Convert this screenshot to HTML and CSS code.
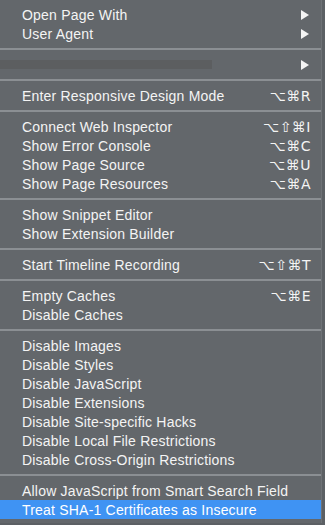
FILE: index.html
```html
<!DOCTYPE html>
<html>
<head>
<meta charset="utf-8">
<link rel="stylesheet" href="styles.css">
</head>
<body>
<div class="menu">
  <div class="item"><span class="label">Open Page With</span><span class="arrow"></span></div>
  <div class="item"><span class="label">User Agent</span><span class="arrow"></span></div>
  <div class="sep"></div>
  <div class="item blurred"><span class="smudge"></span><span class="arrow"></span></div>
  <div class="sep"></div>
  <div class="item"><span class="label">Enter Responsive Design Mode</span><span class="key">⌥⌘R</span></div>
  <div class="sep"></div>
  <div class="item"><span class="label">Connect Web Inspector</span><span class="key">⌥⇧⌘I</span></div>
  <div class="item"><span class="label">Show Error Console</span><span class="key">⌥⌘C</span></div>
  <div class="item"><span class="label">Show Page Source</span><span class="key">⌥⌘U</span></div>
  <div class="item"><span class="label">Show Page Resources</span><span class="key">⌥⌘A</span></div>
  <div class="sep"></div>
  <div class="item"><span class="label">Show Snippet Editor</span></div>
  <div class="item"><span class="label">Show Extension Builder</span></div>
  <div class="sep"></div>
  <div class="item"><span class="label">Start Timeline Recording</span><span class="key">⌥⇧⌘T</span></div>
  <div class="sep"></div>
  <div class="item"><span class="label">Empty Caches</span><span class="key">⌥⌘E</span></div>
  <div class="item"><span class="label">Disable Caches</span></div>
  <div class="sep"></div>
  <div class="item"><span class="label">Disable Images</span></div>
  <div class="item"><span class="label">Disable Styles</span></div>
  <div class="item"><span class="label">Disable JavaScript</span></div>
  <div class="item"><span class="label">Disable Extensions</span></div>
  <div class="item"><span class="label">Disable Site-specific Hacks</span></div>
  <div class="item"><span class="label">Disable Local File Restrictions</span></div>
  <div class="item"><span class="label">Disable Cross-Origin Restrictions</span></div>
  <div class="sep"></div>
  <div class="item"><span class="label">Allow JavaScript from Smart Search Field</span></div>
  <div class="item active"><span class="label">Treat SHA-1 Certificates as Insecure</span></div>
</div>
</body>
</html>
```
FILE: styles.css
```css
html, body {
  margin: 0;
  padding: 0;
  background: #5c6064;
  width: 325px;
  height: 525px;
  overflow: hidden;
}
.menu {
  width: 321px;
  padding: 5px 0 4px;
  background: #63676b;
  border-right: 1px solid #6e7276;
  font-family: "Liberation Sans", Arial, sans-serif;
  font-size: 14px;
  color: #f4f4f4;
}
.item {
  height: 19px;
  display: flex;
  align-items: center;
  padding: 0 12px 0 22px;
}
.item .label {
  flex: 1;
  white-space: nowrap;
  letter-spacing: 0.2px;
}
.item.active {
  background: #3f93f3;
  color: #ffffff;
}
.sep {
  height: 12px;
  display: flex;
  align-items: center;
}
.sep::before {
  content: "";
  display: block;
  width: 100%;
  height: 2px;
  background: #8b8f93;
}
.arrow {
  width: 0;
  height: 0;
  border-top: 5px solid transparent;
  border-bottom: 5px solid transparent;
  border-left: 8px solid #f4f4f4;
  margin-right: 0;
}
.key {
  font-family: "DejaVu Sans", sans-serif;
  font-size: 14px;
  letter-spacing: 0.5px;
  margin-right: -2px;
}
.blurred {
  padding-left: 0;
}
.smudge {
  flex: none;
  width: 212px;
  height: 9px;
  background: #5c5e60;
  margin-right: auto;
}
```
